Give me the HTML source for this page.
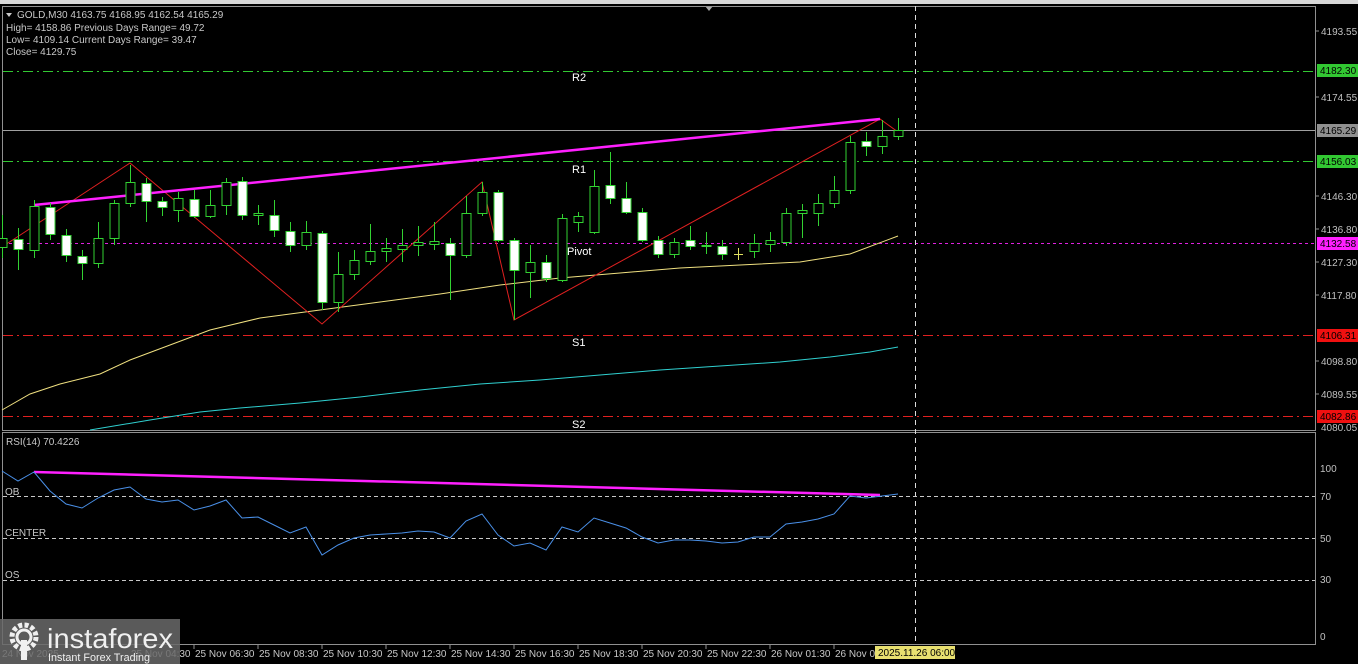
<!DOCTYPE html>
<html><head><meta charset="utf-8"><style>
html,body{margin:0;padding:0;background:#000;width:1358px;height:664px;overflow:hidden}
svg{display:block}
text{font-family:"Liberation Sans",sans-serif}
</style></head><body>
<svg width="1358" height="664" viewBox="0 0 1358 664" xmlns="http://www.w3.org/2000/svg">
<rect width="1358" height="664" fill="#000"/>
<rect x="0" y="0" width="1358" height="4" fill="#d8d8d8"/>
<polygon points="705,6 713,6 709,11" fill="#aaa"/>
<rect x="2.5" y="6.5" width="1313" height="424" fill="none" stroke="#909090"/>
<rect x="2.5" y="432.5" width="1313" height="212" fill="none" stroke="#909090"/>
<g stroke-width="1" fill="none">
<line x1="3" y1="71.5" x2="1315" y2="71.5" stroke="#32c832" stroke-dasharray="10,4,2,4"/>
<line x1="3" y1="130.5" x2="1315" y2="130.5" stroke="#a0a0a0"/>
<line x1="3" y1="161.5" x2="1315" y2="161.5" stroke="#32c832" stroke-dasharray="10,4,2,4"/>
<line x1="3" y1="243.5" x2="1315" y2="243.5" stroke="#e020e0" stroke-dasharray="3,3"/>
<line x1="3" y1="335.5" x2="1315" y2="335.5" stroke="#e02020" stroke-dasharray="10,4,2,4"/>
<line x1="3" y1="416.5" x2="1315" y2="416.5" stroke="#e02020" stroke-dasharray="10,4,2,4"/>
<line x1="915.5" y1="6" x2="915.5" y2="645" stroke="#ddd" stroke-dasharray="5,4"/>
</g>
<polyline points="2,410 30,394 60,384 100,374 130,360 170,345 210,330 260,318 320,310 380,302 440,294 500,285 560,278 620,273 680,268 740,265 800,262 850,254 898,236" fill="none" stroke="#f0e080" stroke-width="1"/>
<polyline points="90,430 150,420 200,412 240,408 300,403 360,397 420,390 480,384 540,380 600,375 660,370 720,366 780,362 830,357 870,352 898,347" fill="none" stroke="#30d0d0" stroke-width="1"/>
<polyline points="5,245 130,163 322,324 482,182 514,320 880,119 898,132" fill="none" stroke="#e02020" stroke-width="1"/>
<line x1="34" y1="205" x2="880" y2="119" stroke="#ff20ff" stroke-width="2.5"/>
<g stroke="#32d232" stroke-width="1">
<line x1="2.5" y1="215" x2="2.5" y2="258"/><rect x="-2" y="238.5" width="9" height="9" fill="#000"/>
<line x1="18.5" y1="228" x2="18.5" y2="270"/><rect x="14" y="239.5" width="9" height="10" fill="#fff"/>
<line x1="34.5" y1="200" x2="34.5" y2="258"/><rect x="30" y="206.5" width="9" height="44" fill="#000"/>
<line x1="50.5" y1="203" x2="50.5" y2="240"/><rect x="46" y="207.5" width="9" height="27" fill="#fff"/>
<line x1="66.5" y1="229" x2="66.5" y2="262"/><rect x="62" y="235.5" width="9" height="20" fill="#fff"/>
<line x1="82.5" y1="250" x2="82.5" y2="280"/><rect x="78" y="256.5" width="9" height="7" fill="#fff"/>
<line x1="98.5" y1="222" x2="98.5" y2="268"/><rect x="94" y="238.5" width="9" height="25" fill="#000"/>
<line x1="114.5" y1="200" x2="114.5" y2="245"/><rect x="110" y="203.5" width="9" height="35" fill="#000"/>
<line x1="130.5" y1="165" x2="130.5" y2="207"/><rect x="126" y="182.5" width="9" height="21" fill="#000"/>
<line x1="146.5" y1="178" x2="146.5" y2="222"/><rect x="142" y="183.5" width="9" height="18" fill="#fff"/>
<line x1="162.5" y1="197" x2="162.5" y2="216"/><rect x="158" y="201.5" width="9" height="6" fill="#fff"/>
<line x1="178.5" y1="192" x2="178.5" y2="222"/><rect x="174" y="198.5" width="9" height="12" fill="#000"/>
<line x1="194.5" y1="190" x2="194.5" y2="218"/><rect x="190" y="199.5" width="9" height="17" fill="#fff"/>
<line x1="210.5" y1="190" x2="210.5" y2="218"/><rect x="206" y="205.5" width="9" height="11" fill="#000"/>
<line x1="226.5" y1="178" x2="226.5" y2="215"/><rect x="222" y="182.5" width="9" height="23" fill="#000"/>
<line x1="242.5" y1="177" x2="242.5" y2="220"/><rect x="238" y="181.5" width="9" height="34" fill="#fff"/>
<line x1="258.5" y1="205" x2="258.5" y2="225"/><rect x="254" y="213.5" width="9" height="2" fill="#000"/>
<line x1="274.5" y1="200" x2="274.5" y2="237"/><rect x="270" y="215.5" width="9" height="15" fill="#fff"/>
<line x1="290.5" y1="222" x2="290.5" y2="252"/><rect x="286" y="231.5" width="9" height="14" fill="#fff"/>
<line x1="306.5" y1="221" x2="306.5" y2="250"/><rect x="302" y="232.5" width="9" height="13" fill="#000"/>
<line x1="322.5" y1="231" x2="322.5" y2="310"/><rect x="318" y="233.5" width="9" height="69" fill="#fff"/>
<line x1="338.5" y1="252" x2="338.5" y2="312"/><rect x="334" y="274.5" width="9" height="28" fill="#000"/>
<line x1="354.5" y1="250" x2="354.5" y2="280"/><rect x="350" y="260.5" width="9" height="14" fill="#000"/>
<line x1="370.5" y1="224" x2="370.5" y2="265"/><rect x="366" y="251.5" width="9" height="10" fill="#000"/>
<line x1="386.5" y1="238" x2="386.5" y2="262"/><rect x="382" y="248.5" width="9" height="3" fill="#000"/>
<line x1="402.5" y1="229" x2="402.5" y2="262"/><rect x="398" y="245.5" width="9" height="4" fill="#000"/>
<line x1="418.5" y1="226" x2="418.5" y2="256"/><rect x="414" y="242.5" width="9" height="3" fill="#000"/>
<line x1="434.5" y1="222" x2="434.5" y2="250"/><rect x="430" y="241.5" width="9" height="3" fill="#000"/>
<line x1="450.5" y1="238" x2="450.5" y2="300"/><rect x="446" y="243.5" width="9" height="12" fill="#fff"/>
<line x1="466.5" y1="196" x2="466.5" y2="258"/><rect x="462" y="213.5" width="9" height="42" fill="#000"/>
<line x1="482.5" y1="182" x2="482.5" y2="216"/><rect x="478" y="192.5" width="9" height="21" fill="#000"/>
<line x1="498.5" y1="190" x2="498.5" y2="242"/><rect x="494" y="192.5" width="9" height="48" fill="#fff"/>
<line x1="514.5" y1="238" x2="514.5" y2="320"/><rect x="510" y="240.5" width="9" height="30" fill="#fff"/>
<line x1="530.5" y1="245" x2="530.5" y2="298"/><rect x="526" y="262.5" width="9" height="10" fill="#000"/>
<line x1="546.5" y1="255" x2="546.5" y2="282"/><rect x="542" y="262.5" width="9" height="16" fill="#fff"/>
<line x1="562.5" y1="214" x2="562.5" y2="282"/><rect x="558" y="218.5" width="9" height="62" fill="#000"/>
<line x1="578.5" y1="212" x2="578.5" y2="232"/><rect x="574" y="216.5" width="9" height="6" fill="#000"/>
<line x1="594.5" y1="170" x2="594.5" y2="234"/><rect x="590" y="186.5" width="9" height="46" fill="#000"/>
<line x1="610.5" y1="152" x2="610.5" y2="204"/><rect x="606" y="185.5" width="9" height="13" fill="#fff"/>
<line x1="626.5" y1="182" x2="626.5" y2="214"/><rect x="622" y="198.5" width="9" height="14" fill="#fff"/>
<line x1="642.5" y1="208" x2="642.5" y2="242"/><rect x="638" y="212.5" width="9" height="28" fill="#fff"/>
<line x1="658.5" y1="236" x2="658.5" y2="258"/><rect x="654" y="240.5" width="9" height="14" fill="#fff"/>
<line x1="674.5" y1="238" x2="674.5" y2="258"/><rect x="670" y="242.5" width="9" height="12" fill="#000"/>
<line x1="690.5" y1="226" x2="690.5" y2="250"/><rect x="686" y="240.5" width="9" height="6" fill="#fff"/>
<line x1="706.5" y1="232" x2="706.5" y2="254"/><rect x="702" y="245.5" width="9" height="1" fill="#000"/>
<line x1="722.5" y1="240" x2="722.5" y2="260"/><rect x="718" y="246.5" width="9" height="8" fill="#fff"/>
<line x1="738.5" y1="248" x2="738.5" y2="260" stroke="#e0e060"/><line x1="734" y1="254.5" x2="743" y2="254.5" stroke="#e0e060"/>
<line x1="754.5" y1="234" x2="754.5" y2="258"/><rect x="750" y="243.5" width="9" height="8" fill="#000"/>
<line x1="770.5" y1="232" x2="770.5" y2="252"/><rect x="766" y="240.5" width="9" height="4" fill="#000"/>
<line x1="786.5" y1="208" x2="786.5" y2="246"/><rect x="782" y="213.5" width="9" height="29" fill="#000"/>
<line x1="802.5" y1="204" x2="802.5" y2="238"/><rect x="798" y="210.5" width="9" height="3" fill="#000"/>
<line x1="818.5" y1="194" x2="818.5" y2="226"/><rect x="814" y="203.5" width="9" height="10" fill="#000"/>
<line x1="834.5" y1="176" x2="834.5" y2="208"/><rect x="830" y="190.5" width="9" height="13" fill="#000"/>
<line x1="850.5" y1="136" x2="850.5" y2="194"/><rect x="846" y="142.5" width="9" height="48" fill="#000"/>
<line x1="866.5" y1="132" x2="866.5" y2="156"/><rect x="862" y="141.5" width="9" height="5" fill="#fff"/>
<line x1="882.5" y1="120" x2="882.5" y2="154"/><rect x="878" y="136.5" width="9" height="10" fill="#000"/>
<line x1="898.5" y1="118" x2="898.5" y2="140"/><rect x="894" y="130.5" width="9" height="6" fill="#000"/>
</g>
<g fill="#fff" font-size="11">
<text x="572" y="81">R2</text><text x="572" y="173">R1</text><text x="567" y="255">Pivot</text>
<text x="572" y="346">S1</text><text x="572" y="428">S2</text>
</g>
<g fill="#c8c8c8" font-size="10">
<polygon points="6,13 12,13 9,17" fill="#c8c8c8"/>
<text x="17" y="18">GOLD,M30  4163.75 4168.95 4162.54 4165.29</text>
<text x="6" y="31">High= 4158.86    Previous Days Range= 49.72</text>
<text x="6" y="43">Low= 4109.14    Current Days Range= 39.47</text>
<text x="6" y="55">Close= 4129.75</text>
<text x="6" y="445">RSI(14) 70.4226</text>
</g>
<g fill="#c0c0c0" font-size="10" stroke="none">
<text x="1321" y="35">4193.55</text>
<text x="1321" y="101">4174.55</text>
<text x="1321" y="200">4146.30</text>
<text x="1321" y="233">4136.80</text>
<text x="1321" y="266">4127.30</text>
<text x="1321" y="299">4117.80</text>
<text x="1321" y="365">4098.80</text>
<text x="1321" y="398">4089.55</text>
<text x="1321" y="431">4080.05</text>
<text x="1320" y="472">100</text>
<text x="1320" y="500">70</text>
<text x="1320" y="542">50</text>
<text x="1320" y="583">30</text>
<text x="1320" y="640">0</text>
</g>
<g stroke="#909090"><line x1="1316" y1="31" x2="1319" y2="31"/><line x1="1316" y1="97" x2="1319" y2="97"/><line x1="1316" y1="196" x2="1319" y2="196"/><line x1="1316" y1="229" x2="1319" y2="229"/><line x1="1316" y1="262" x2="1319" y2="262"/><line x1="1316" y1="295" x2="1319" y2="295"/><line x1="1316" y1="361" x2="1319" y2="361"/><line x1="1316" y1="394" x2="1319" y2="394"/></g>
<rect x="1317" y="64" width="41" height="13" fill="#32c832"/><text x="1320" y="74" font-size="10" fill="#000">4182.30</text>
<rect x="1317" y="124" width="41" height="13" fill="#909090"/><text x="1320" y="134" font-size="10" fill="#000">4165.29</text>
<rect x="1317" y="155" width="41" height="13" fill="#32c832"/><text x="1320" y="165" font-size="10" fill="#000">4156.03</text>
<rect x="1317" y="237" width="41" height="13" fill="#ff20ff"/><text x="1320" y="247" font-size="10" fill="#000">4132.58</text>
<rect x="1317" y="329" width="41" height="13" fill="#f01010"/><text x="1320" y="339" font-size="10" fill="#000">4106.31</text>
<rect x="1317" y="410" width="41" height="13" fill="#f01010"/><text x="1320" y="420" font-size="10" fill="#000">4082.86</text>
<g stroke="#c8c8c8" stroke-dasharray="4,3"><line x1="3" y1="496.5" x2="1315" y2="496.5"/><line x1="3" y1="538.5" x2="1315" y2="538.5"/><line x1="3" y1="580.5" x2="1315" y2="580.5"/></g>
<g fill="#c8c8c8" font-size="10"><text x="5" y="495">OB</text><text x="5" y="536">CENTER</text><text x="5" y="578">OS</text></g>
<line x1="34" y1="472" x2="880" y2="495" stroke="#ff20ff" stroke-width="2.5"/>
<polyline fill="none" stroke="#4a90e8" stroke-width="1" points="2,471 18,481 34,472 50,491 66,504 82,508 98,498 114,490 130,487 146,499 162,502 178,500 194,510 210,506 226,500 242,518 258,517 274,525 290,533 306,527 322,555 338,545 354,538 370,535 386,534 402,533 418,531 434,532 450,538 466,521 482,514 498,535 514,546 530,543 546,550 562,527 578,532 594,518 610,523 626,528 642,537 658,543 674,540 690,540 706,541 722,543 738,542 754,537 770,537 786,524 802,522 818,519 834,514 850,496 866,498 882,496 898,494"/>
<g fill="#c8c8c8" font-size="10">
<text x="2" y="657">24 Nov 2025</text><text x="131" y="657">25 Nov 04:30</text>
<text x="195" y="657">25 Nov 06:30</text><text x="259" y="657">25 Nov 08:30</text><text x="323" y="657">25 Nov 10:30</text>
<text x="387" y="657">25 Nov 12:30</text><text x="451" y="657">25 Nov 14:30</text><text x="515" y="657">25 Nov 16:30</text>
<text x="579" y="657">25 Nov 18:30</text><text x="643" y="657">25 Nov 20:30</text><text x="707" y="657">25 Nov 22:30</text>
<text x="771" y="657">26 Nov 01:30</text><text x="835" y="657">26 Nov 03:30</text>
</g>
<g stroke="#909090"><line x1="194" y1="645" x2="194" y2="649"/><line x1="258" y1="645" x2="258" y2="649"/><line x1="322" y1="645" x2="322" y2="649"/><line x1="386" y1="645" x2="386" y2="649"/><line x1="450" y1="645" x2="450" y2="649"/><line x1="514" y1="645" x2="514" y2="649"/><line x1="578" y1="645" x2="578" y2="649"/><line x1="642" y1="645" x2="642" y2="649"/><line x1="706" y1="645" x2="706" y2="649"/><line x1="770" y1="645" x2="770" y2="649"/><line x1="834" y1="645" x2="834" y2="649"/></g>
<rect x="875" y="646" width="80" height="13" fill="#e8e070"/><text x="878" y="656" font-size="10" fill="#000">2025.11.26 06:00</text>
<rect x="0" y="619" width="180" height="45" fill="#6a6a6a" fill-opacity="0.85"/>
<g fill="#f0f0f0">
<circle cx="24" cy="637" r="12" fill="none" stroke="#f0f0f0" stroke-width="5" stroke-dasharray="4,2.3"/>
<circle cx="24" cy="637" r="7" fill="none" stroke="#f0f0f0" stroke-width="3"/>
<rect x="21" y="640" width="6" height="20"/>
<text x="47" y="648" font-size="28" textLength="126" lengthAdjust="spacingAndGlyphs">instaforex</text>
<text x="48" y="661" font-size="11" textLength="102" lengthAdjust="spacingAndGlyphs">Instant Forex Trading</text>
</g>
</svg>
</body></html>
